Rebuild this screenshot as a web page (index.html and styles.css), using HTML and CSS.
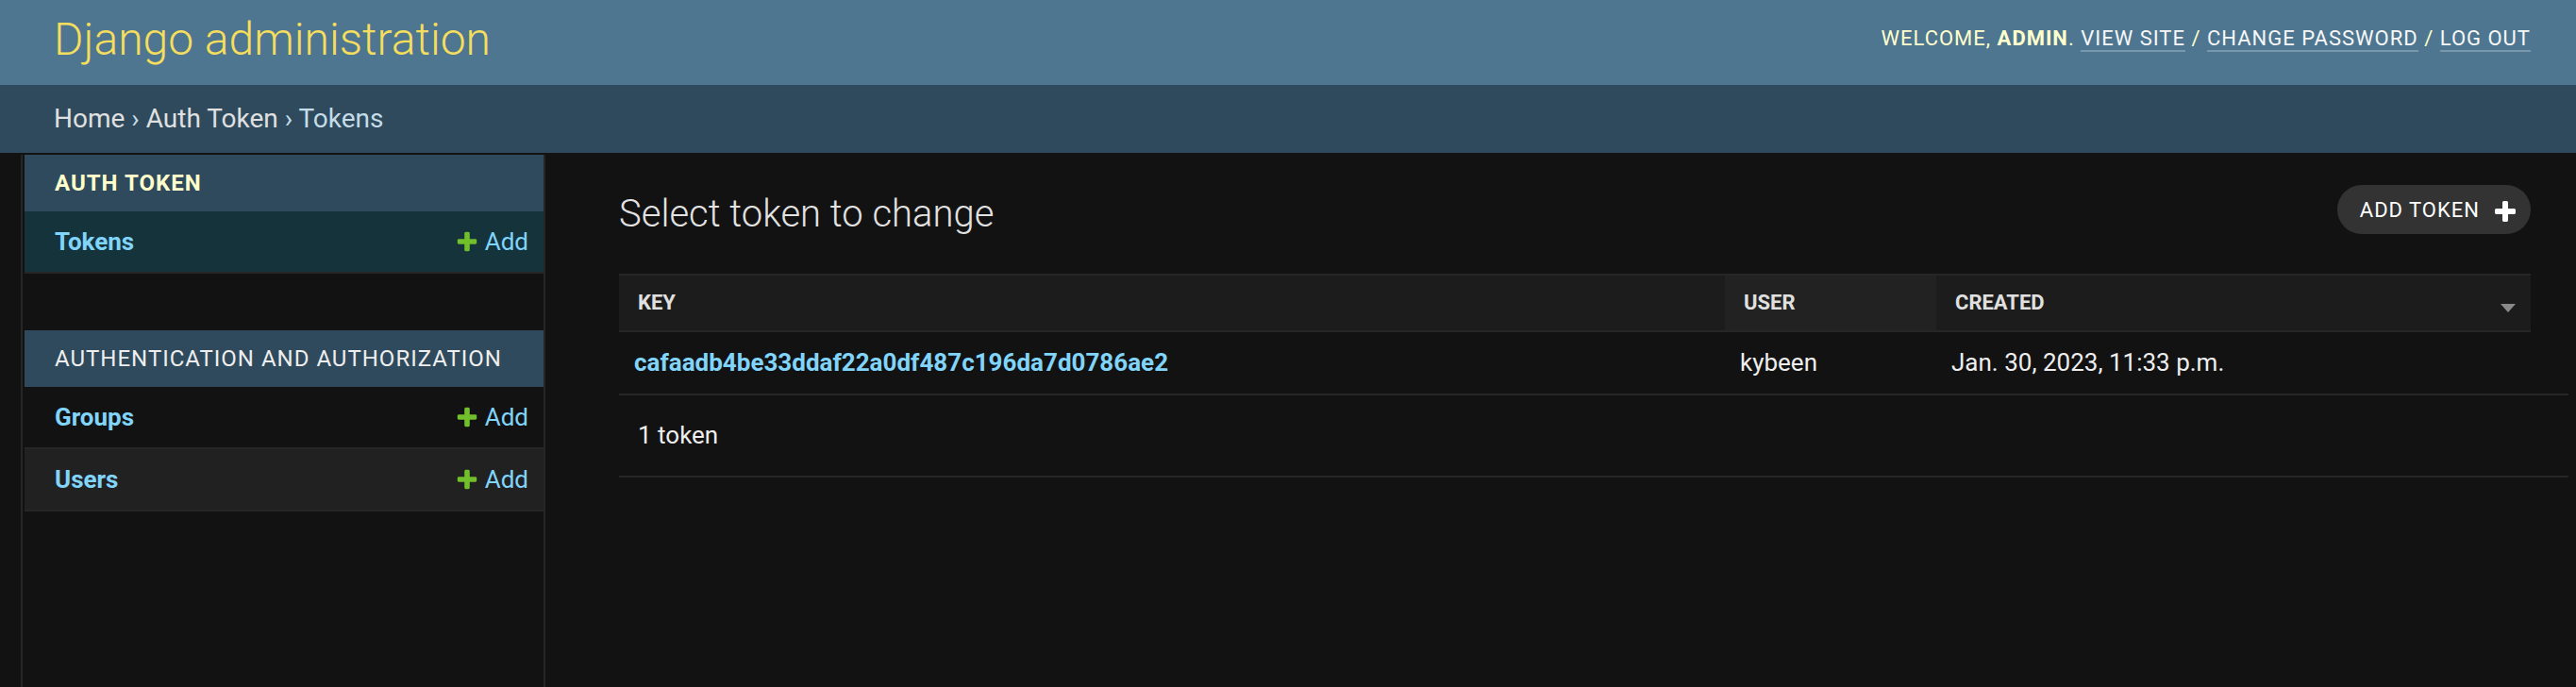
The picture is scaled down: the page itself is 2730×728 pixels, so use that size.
FILE: index.html
```html
<!DOCTYPE html>
<html lang="en">
<head>
<meta charset="utf-8">
<title>Select token to change | Django site admin</title>
<link rel="stylesheet" href="styles.css">
</head>
<body>
  <header class="header">
    <h1 class="site-name"><a href="#">Django administration</a></h1>
    <div class="user-tools">Welcome, <strong>admin</strong>. <a href="#">View site</a> / <a href="#">Change password</a> / <a href="#">Log out</a></div>
  </header>
  <nav class="breadcrumbs"><a href="#">Home</a> &rsaquo; <a href="#">Auth Token</a> &rsaquo; Tokens</nav>
  <div class="main">
    <div class="toggle"></div>
    <aside class="sidebar">
      <div class="module current">
        <div class="caption">Auth Token</div>
        <div class="row selected">
          <a class="model" href="#">Tokens</a>
          <a class="addlink" href="#"><svg viewBox="0 0 1792 1792"><path fill="#70bf2b" d="M1600 796v192q0 40-28 68t-68 28h-416v416q0 40-28 68t-68 28h-192q-40 0-68-28t-28-68v-416h-416q-40 0-68-28t-28-68v-192q0-40 28-68t68-28h416v-416q0-40 28-68t68-28h192q40 0 68 28t28 68v416h416q40 0 68 28t28 68z"/></svg>Add</a>
        </div>
      </div>
      <div class="module">
        <div class="caption">Authentication and Authorization</div>
        <div class="row">
          <a class="model" href="#">Groups</a>
          <a class="addlink" href="#"><svg viewBox="0 0 1792 1792"><path fill="#70bf2b" d="M1600 796v192q0 40-28 68t-68 28h-416v416q0 40-28 68t-68 28h-192q-40 0-68-28t-28-68v-416h-416q-40 0-68-28t-28-68v-192q0-40 28-68t68-28h416v-416q0-40 28-68t68-28h192q40 0 68 28t28 68v416h416q40 0 68 28t28 68z"/></svg>Add</a>
        </div>
        <div class="row alt">
          <a class="model" href="#">Users</a>
          <a class="addlink" href="#"><svg viewBox="0 0 1792 1792"><path fill="#70bf2b" d="M1600 796v192q0 40-28 68t-68 28h-416v416q0 40-28 68t-68 28h-192q-40 0-68-28t-28-68v-416h-416q-40 0-68-28t-28-68v-192q0-40 28-68t68-28h416v-416q0-40 28-68t68-28h192q40 0 68 28t28 68v416h416q40 0 68 28t28 68z"/></svg>Add</a>
        </div>
      </div>
    </aside>
    <main class="content">
      <div class="title-row">
        <h1 class="title">Select token to change</h1>
        <a class="object-tool" href="#">Add token<svg viewBox="0 0 1792 1792"><path fill="#ffffff" d="M1600 736v192q0 40-28 68t-68 28h-416v416q0 40-28 68t-68 28h-192q-40 0-68-28t-28-68v-416h-416q-40 0-68-28t-28-68v-192q0-40 28-68t68-28h416v-416q0-40 28-68t68-28h192q40 0 68 28t28 68v416h416q40 0 68 28t28 68z"/></svg></a>
      </div>
      <table class="results">
        <colgroup>
          <col class="c-key">
          <col class="c-user">
          <col class="c-created">
        </colgroup>
        <thead>
          <tr>
            <th>Key</th>
            <th class="th-user">User</th>
            <th><div class="sorted">Created<svg class="sort-arrow" viewBox="0 0 16 9"><path d="M0 0h16L8 9z" fill="#8a8a8a"/></svg></div></th>
          </tr>
        </thead>
        <tbody>
          <tr>
            <td><a class="key" href="#">cafaadb4be33ddaf22a0df487c196da7d0786ae2</a></td>
            <td>kybeen</td>
            <td>Jan. 30, 2023, 11:33 p.m.</td>
          </tr>
        </tbody>
      </table>
      <p class="paginator">1 token</p>
    </main>
  </div>
</body>
</html>
```
FILE: styles.css
```css
* { box-sizing: border-box; }
html, body { margin: 0; padding: 0; }
body {
  background: #121212;
  color: #eeeeee;
  font-family: Roboto, "Liberation Sans", Arial, sans-serif;
  min-height: 100vh;
  display: flex;
  flex-direction: column;
}
a { text-decoration: none; }

/* Header */
.header {
  flex: none;
  height: 90px;
  background: #4e7690;
  display: flex;
  justify-content: space-between;
  align-items: flex-start;
  padding: 0 48px 0 57px;
}
.site-name {
  margin: 18px 0 0;
  font-size: 48px;
  line-height: 48px;
  font-weight: 300;
}
.site-name a { color: #f5dd5d; }
.user-tools {
  margin-top: 28px;
  font-size: 22px;
  line-height: 26px;
  letter-spacing: 1px;
  text-transform: uppercase;
  color: #ffffcc;
}
.user-tools strong { font-weight: 700; }
.user-tools a {
  color: #f7f7f7;
  border-bottom: 2px solid rgba(255, 255, 255, 0.25);
}

/* Breadcrumbs */
.breadcrumbs {
  flex: none;
  background: #2e4a5c;
  padding: 20px 57px;
  font-size: 28px;
  line-height: 32px;
  color: #c4dce8;
}
.breadcrumbs a { color: #e0e0e0; }

/* Main area */
.main {
  flex: 1;
  display: flex;
  padding-top: 2px;
}
.toggle {
  flex: none;
  width: 24px;
  border-right: 2px solid #262626;
}
.sidebar {
  flex: none;
  width: 554px;
  padding-left: 2px;
  border-right: 2px solid #262626;
}
.module { margin-bottom: 60px; }
.caption {
  height: 60px;
  display: flex;
  align-items: center;
  padding: 0 32px;
  background: #2e4a5c;
  font-size: 24px;
  letter-spacing: 1px;
  white-space: nowrap;
  text-transform: uppercase;
  color: #eeeeee;
}
.module.current .caption {
  font-weight: 700;
  color: #ffffcc;
}
.row {
  height: 66px;
  display: flex;
  align-items: center;
  justify-content: space-between;
  padding: 0 16px 0 32px;
  border-bottom: 2px solid #262626;
  font-size: 26px;
}
.row.selected { background: #14333a; }
.row.alt { background: #212121; }
.model { color: #81d4fa; font-weight: 700; }
.addlink {
  color: #81d4fa;
  display: flex;
  align-items: center;
}
.addlink svg {
  width: 26px;
  height: 26px;
  margin-right: 6px;
}

/* Content */
.content {
  flex: 1;
  min-width: 0;
  padding: 32px 8px 0 78px;
}
.title-row {
  display: flex;
  justify-content: space-between;
  align-items: flex-start;
  margin-right: 40px;
}
.title {
  margin: 7px 0 0;
  font-size: 40px;
  line-height: 48px;
  font-weight: 300;
  color: #e2e2e2;
}
.object-tool {
  height: 52px;
  display: flex;
  align-items: center;
  gap: 13px;
  padding: 0 13px 0 24px;
  border-radius: 26px;
  background: #333333;
  color: #ffffff;
  font-size: 22px;
  letter-spacing: 1px;
  text-transform: uppercase;
}
.object-tool svg {
  width: 28px;
  height: 28px;
  margin-top: 6px;
}

.results {
  width: calc(100% - 40px);
  margin-top: 39px;
  border-collapse: separate;
  border-spacing: 0;
  table-layout: fixed;
}
.c-user { width: 224px; }
.c-created { width: 630px; }
.results th {
  padding: 16px 16px 16px 20px;
  background: #1c1c1c;
  border-top: 2px solid #262626;
  border-bottom: 2px solid #262626;
  text-align: left;
  font-size: 22px;
  line-height: 26px;
  font-weight: 700;
  color: #e0e0e0;
  text-transform: uppercase;
}
.results th.th-user { background: #222222; }
.sorted {
  display: flex;
  justify-content: space-between;
  align-items: flex-start;
}
.sort-arrow {
  width: 16px;
  height: 9px;
  margin-top: 14px;
}
.results td {
  padding: 16px 16px 17px;
  font-size: 26px;
  line-height: 32px;
  color: #eeeeee;
  text-align: left;
  white-space: nowrap;
}
.key { color: #81d4fa; font-weight: 700; }
.paginator {
  margin: 0;
  padding: 26px 20px;
  border-top: 2px solid #262626;
  border-bottom: 2px solid #262626;
  font-size: 26px;
  line-height: 33px;
  color: #eeeeee;
}
```
